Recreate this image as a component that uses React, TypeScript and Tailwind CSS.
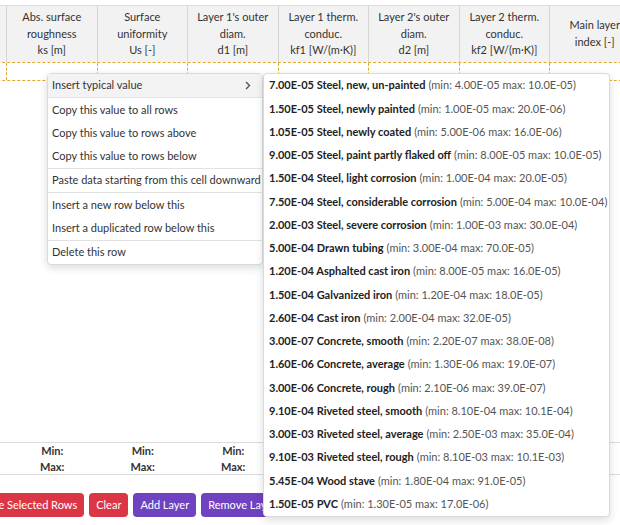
import React from 'react';

const columns = [
  [''],
  ['Abs. surface', 'roughness', 'ks [m]'],
  ['Surface', 'uniformity', 'Us [-]'],
  ["Layer 1's outer", 'diam.', 'd1 [m]'],
  ['Layer 1 therm.', 'conduc.', 'kf1 [W/(m·K)]'],
  ["Layer 2's outer", 'diam.', 'd2 [m]'],
  ['Layer 2 therm.', 'conduc.', 'kf2 [W/(m·K)]'],
  ['Main layer', 'index [-]'],
];

const typicalValues = [
  ['7.00E-05', 'Steel, new, un-painted', '4.00E-05', '10.0E-05'],
  ['1.50E-05', 'Steel, newly painted', '1.00E-05', '20.0E-06'],
  ['1.05E-05', 'Steel, newly coated', '5.00E-06', '16.0E-06'],
  ['9.00E-05', 'Steel, paint partly flaked off', '8.00E-05', '10.0E-05'],
  ['1.50E-04', 'Steel, light corrosion', '1.00E-04', '20.0E-05'],
  ['7.50E-04', 'Steel, considerable corrosion', '5.00E-04', '10.0E-04'],
  ['2.00E-03', 'Steel, severe corrosion', '1.00E-03', '30.0E-04'],
  ['5.00E-04', 'Drawn tubing', '3.00E-04', '70.0E-05'],
  ['1.20E-04', 'Asphalted cast iron', '8.00E-05', '16.0E-05'],
  ['1.50E-04', 'Galvanized iron', '1.20E-04', '18.0E-05'],
  ['2.60E-04', 'Cast iron', '2.00E-04', '32.0E-05'],
  ['3.00E-07', 'Concrete, smooth', '2.20E-07', '38.0E-08'],
  ['1.60E-06', 'Concrete, average', '1.30E-06', '19.0E-07'],
  ['3.00E-06', 'Concrete, rough', '2.10E-06', '39.0E-07'],
  ['9.10E-04', 'Riveted steel, smooth', '8.10E-04', '10.1E-04'],
  ['3.00E-03', 'Riveted steel, average', '2.50E-03', '35.0E-04'],
  ['9.10E-03', 'Riveted steel, rough', '8.10E-03', '10.1E-03'],
  ['5.45E-04', 'Wood stave', '1.80E-04', '91.0E-05'],
  ['1.50E-05', 'PVC', '1.30E-05', '17.0E-06'],
];

// groups of context menu entries, separated by a line
const menuGroups = [
  ['Insert typical value'],
  ['Copy this value to all rows', 'Copy this value to rows above', 'Copy this value to rows below'],
  ['Paste data starting from this cell downward'],
  ['Insert a new row below this', 'Insert a duplicated row below this'],
  ['Delete this row'],
];

function ContextMenu() {
  return (
    <div className="absolute left-[47px] top-[73px] w-[216px] bg-white border border-[#dadada] rounded-[4px] shadow-[0_3px_8px_rgba(0,0,0,0.14)] text-[#333]">
      {menuGroups.map((group, gi) => (
        <div key={gi} className={gi > 0 ? 'border-t border-[#e2e2e2]' : ''}>
          {group.map(label => (
            <div
              key={label}
              className={`h-[23.25px] flex items-center justify-between pl-[4px] pr-[11px] whitespace-nowrap ${
                gi === 0 ? 'bg-[#f3f3f3]' : ''
              }`}
            >
              <span>{label}</span>
              {gi === 0 && (
                <svg width="6" height="9" viewBox="0 0 6 9">
                  <path d="M1 1l3.5 3.5L1 8" fill="none" stroke="#555" strokeWidth="1.4" />
                </svg>
              )}
            </div>
          ))}
        </div>
      ))}
    </div>
  );
}

function TypicalValues() {
  return (
    <div className="absolute left-[263px] top-[73px] w-[347px] bg-white border border-[#dadada] rounded-[4px] shadow-[0_3px_8px_rgba(0,0,0,0.14)]">
      {typicalValues.map(([value, name, min, max], i) => (
        <div key={i} className="h-[23.25px] flex items-center pl-[5px] whitespace-nowrap">
          <span className="font-bold text-[#222]">
            {value} {name}
          </span>
          <span className="text-[#555] ml-[3px]">
            (min: {min} max: {max})
          </span>
        </div>
      ))}
    </div>
  );
}

export default function App() {
  return (
    <div className="w-[620px] h-[525px] overflow-hidden bg-white relative text-[11px] text-[#333] font-['Lato',sans-serif]">
      <div className="pt-[5px] -ml-[83.5px] w-[800px]">
        {/* header */}
        <div className="flex h-[57px] bg-[#f2f2f2] border-t border-[#dcdcdc]">
          {columns.map((lines, i) => (
            <div
              key={i}
              className="w-[90.5px] shrink-0 border-r border-[#d6d6d6] flex flex-col items-center justify-center text-center leading-[16.6px] text-[#333]"
            >
              {lines.map(l => (
                <div key={l} className="whitespace-nowrap">
                  {l}
                </div>
              ))}
            </div>
          ))}
        </div>

        {/* selected row */}
        <div className="flex h-[19px] border-t border-b border-dashed border-[#e0a82e]">
          {columns.map((_, i) => (
            <div key={i} className="w-[90.5px] shrink-0 border-r border-dashed border-[#e0a82e]" />
          ))}
        </div>

        <div className="h-[361px]" />

        {/* min / max row */}
        <div className="flex h-[33px] border-t border-b border-[#dcdcdc]">
          {columns.map((_, i) => (
            <div
              key={i}
              className="w-[90.5px] shrink-0 flex flex-col items-center justify-center leading-[16px] font-bold text-[#333]"
            >
              {i > 0 && i < 4 && (
                <>
                  <div>Min:</div>
                  <div>Max:</div>
                </>
              )}
            </div>
          ))}
        </div>
      </div>

      <div className="flex gap-[5px] mt-[18px] -ml-[35px] text-white">
        <button className="h-[24px] px-[7px] rounded-[4px] bg-[#dc3545] whitespace-nowrap">Delete Selected Rows</button>
        <button className="h-[24px] px-[7px] rounded-[4px] bg-[#dc3545]">Clear</button>
        <button className="h-[24px] px-[7px] rounded-[4px] bg-[#6f42c1] whitespace-nowrap">Add Layer</button>
        <button className="h-[24px] px-[7px] rounded-[4px] bg-[#6f42c1] whitespace-nowrap">Remove Layer</button>
      </div>

      <ContextMenu />
      <TypicalValues />
    </div>
  );
}
